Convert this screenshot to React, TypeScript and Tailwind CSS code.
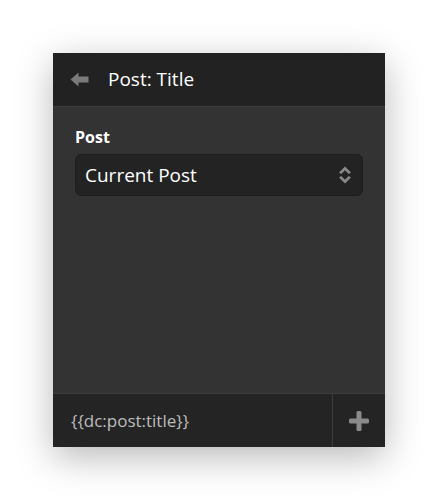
const ChevronUpDown = () => (
    <svg width="14" height="20" viewBox="0 0 14 20" fill="#8a8a8a">
        <path d="M7 1.5 L13 7.5 L10.8 9 L7 5.3 L3.2 9 L1 7.5 Z" />
        <path d="M7 18.5 L13 12.5 L10.8 11 L7 14.7 L3.2 11 L1 12.5 Z" />
    </svg>
)

const BackArrow = () => (
    <svg width="19" height="15" viewBox="0 0 19 15" fill="#7a7a7a">
        <path d="M0.5 7.5 L8.5 0.5 L8.5 4.5 L18.5 4.5 L18.5 10.5 L8.5 10.5 L8.5 14.5 Z" strokeLinejoin="round" />
    </svg>
)

export default function App() {
    return (
        <div
            className="flex h-[500px] w-full items-center justify-center bg-white"
            style={{ fontFamily: '"Open Sans", "Noto Sans", sans-serif' }}
        >
            <div className="flex h-[394px] w-[332px] flex-col bg-[#333333] shadow-[0_10px_35px_rgba(0,0,0,0.28)]">
                <div className="flex h-[54px] shrink-0 items-center gap-[19px] border-b border-[#3d3d3d] bg-[#222222] pl-[17px]">
                    <BackArrow />
                    <span className="text-[19px] text-white">Post: Title</span>
                </div>

                <div className="flex flex-1 flex-col px-[22px] pt-[19px]">
                    <label className="text-[16px] font-bold leading-[22px] text-white">Post</label>
                    <div className="mt-[6px] flex h-[42px] items-center justify-between rounded-[6px] border border-[#1e1e1e] bg-[#232323] pl-[9px] pr-[10px]">
                        <span className="text-[19px] text-white">Current Post</span>
                        <ChevronUpDown />
                    </div>
                </div>

                <div className="flex h-[54px] shrink-0 border-t border-[#3d3d3d] bg-[#242424]">
                    <div className="flex flex-1 items-center px-[18px] text-[17px] text-[#bdbdbd]">
                        {'{{dc:post:title}}'}
                    </div>
                    <div className="flex w-[53px] items-center justify-center border-l border-[#3d3d3d]">
                        <svg width="20" height="20" viewBox="0 0 20 20" fill="#8a8a8a">
                            <rect x="7.5" y="0" width="5" height="20" rx="1.5" />
                            <rect x="0" y="7.5" width="20" height="5" rx="1.5" />
                        </svg>
                    </div>
                </div>
            </div>
        </div>
    )
}
